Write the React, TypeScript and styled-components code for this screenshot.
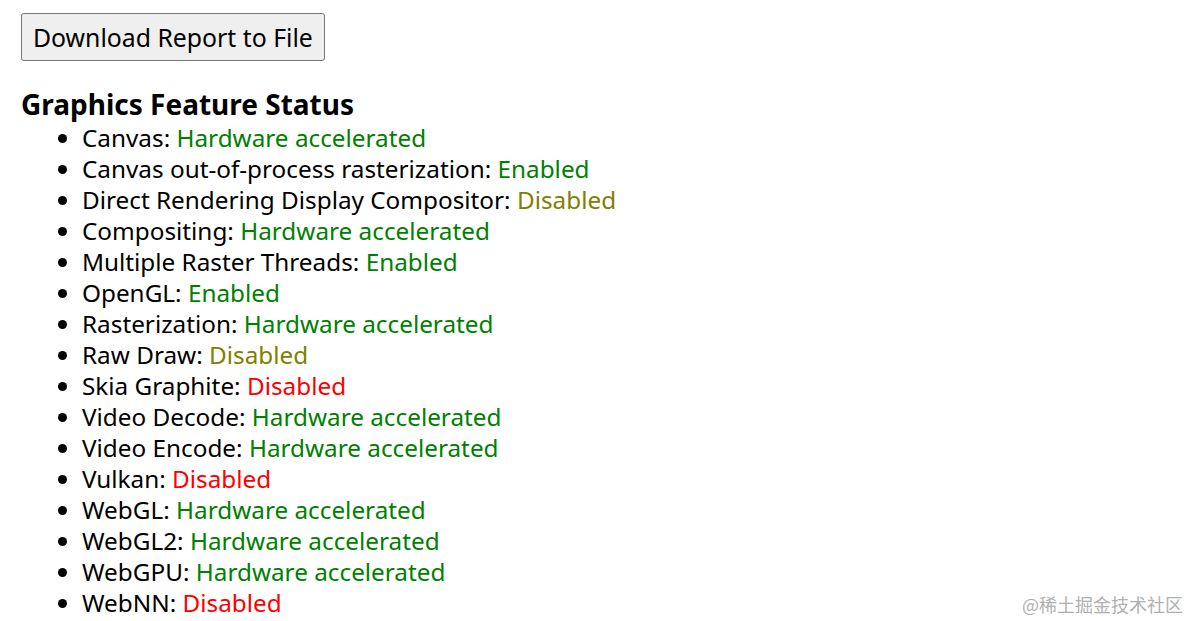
import React from 'react';
import styled, { createGlobalStyle } from 'styled-components';

type Status = 'ok' | 'off' | 'bad';

const GlobalStyle = createGlobalStyle`
  html, body {
    margin: 0;
    padding: 0;
    background: #fff;
  }
  body {
    font-family: "Noto Sans", "Open Sans", sans-serif;
    color: #000;
  }
`;

const Page = styled.main`
  position: relative;
  width: 1190px;
  height: 621px;
  padding: 13px 21px 0;
  box-sizing: border-box;
  overflow: hidden;
`;

const DownloadBtn = styled.button`
  display: block;
  height: 48px;
  padding: 0 11px;
  font-family: inherit;
  font-size: 24.8px;
  color: #000;
  background: #efefef;
  border: 1px solid #767676;
  border-radius: 3px;
`;

const Heading = styled.h3`
  margin: 27px 0 0;
  font-size: 28px;
  font-weight: 700;
  line-height: 33px;
`;

const FeatureList = styled.ul`
  margin: 1px 0 0;
  padding-left: 61px;
  font-size: 24.3px;
  line-height: 31px;
`;

const colours: Record<Status, string> = {
  ok: '#008000',
  off: '#808000',
  bad: '#ff0000',
};

const Value = styled.span<{ $status: Status }>`
  color: ${(p) => colours[p.$status]};
`;

const Watermark = styled.div`
  position: absolute;
  right: 7px;
  bottom: 4px;
  font-family: "Noto Sans CJK SC", sans-serif;
  font-size: 18px;
  color: #b0b0b0;
`;

const features: [string, string, Status][] = [
  ['Canvas', 'Hardware accelerated', 'ok'],
  ['Canvas out-of-process rasterization', 'Enabled', 'ok'],
  ['Direct Rendering Display Compositor', 'Disabled', 'off'],
  ['Compositing', 'Hardware accelerated', 'ok'],
  ['Multiple Raster Threads', 'Enabled', 'ok'],
  ['OpenGL', 'Enabled', 'ok'],
  ['Rasterization', 'Hardware accelerated', 'ok'],
  ['Raw Draw', 'Disabled', 'off'],
  ['Skia Graphite', 'Disabled', 'bad'],
  ['Video Decode', 'Hardware accelerated', 'ok'],
  ['Video Encode', 'Hardware accelerated', 'ok'],
  ['Vulkan', 'Disabled', 'bad'],
  ['WebGL', 'Hardware accelerated', 'ok'],
  ['WebGL2', 'Hardware accelerated', 'ok'],
  ['WebGPU', 'Hardware accelerated', 'ok'],
  ['WebNN', 'Disabled', 'bad'],
];

export default function App() {
  return (
    <Page>
      <GlobalStyle />
      <DownloadBtn>Download Report to File</DownloadBtn>
      <Heading>Graphics Feature Status</Heading>
      <FeatureList>
        {features.map(([name, value, status]) => (
          <li key={name}>
            {name}: <Value $status={status}>{value}</Value>
          </li>
        ))}
      </FeatureList>
      <Watermark>@稀土掘金技术社区</Watermark>
    </Page>
  );
}
